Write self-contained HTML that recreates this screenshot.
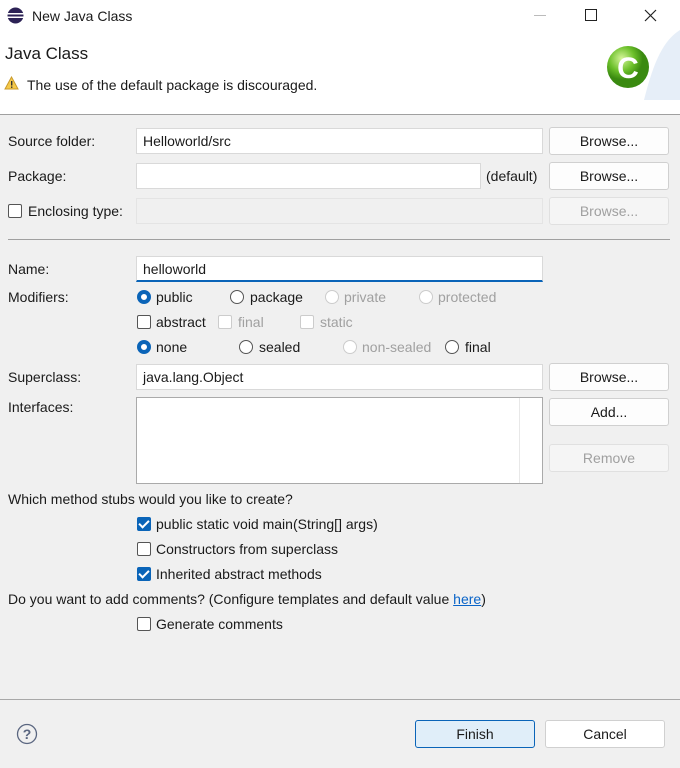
<!DOCTYPE html><html><head><style>
*{box-sizing:border-box;margin:0;padding:0}
body{width:680px;height:768px;background:#f0f0f0;font-family:"Liberation Sans",sans-serif;font-size:14px;color:#1a1a1a;position:relative;overflow:hidden}
.a{position:absolute;white-space:nowrap}
.tb{position:absolute;background:#fff;border:1px solid #d9d9d9}
.btn{position:absolute;background:#fdfdfd;border:1px solid #d0d0d0;border-radius:3px;text-align:center;line-height:26px;width:120px;height:28px}
.dis{color:#a0a0a0;background:#f5f5f5;border-color:#e0e0e0}
.rb{position:absolute;width:14px;height:14px;border:1px solid #555;border-radius:50%;background:#fff}
.rb.on{border:4px solid #0a64b8}
.rb.d{border-color:#ccc}
.cb{position:absolute;width:14px;height:14px;border:1px solid #555;border-radius:2px;background:#fff}
.cb.d{border-color:#ccc}
.cb.on{background:#0a64b8;border-color:#0a64b8}
.cb.on:after{content:"";position:absolute;left:3px;top:0px;width:4px;height:8px;border:solid #fff;border-width:0 2px 2px 0;transform:rotate(45deg)}
.g{color:#a0a0a0}
</style></head><body>
<div class="a" style="left:0;top:0;width:680px;height:114px;background:#fff"></div>
<div class="a" style="left:0;top:114px;width:680px;height:1px;background:#a0a0a0"></div>
<svg class="a" style="left:7px;top:7px" width="17" height="17"><circle cx="8.5" cy="8.5" r="8" fill="#2c2255"/><rect x="0" y="6" width="17" height="1.5" fill="#fff"/><rect x="0" y="9.5" width="17" height="1.5" fill="#fff"/></svg>
<div class="a" style="left:32px;top:8px;font-size:14px">New Java Class</div>
<div class="a" style="left:534px;top:15px;width:12px;height:1px;background:#bbb"></div>
<div class="a" style="left:585px;top:9px;width:12px;height:12px;border:1.3px solid #222"></div>
<svg class="a" style="left:644px;top:9px" width="13" height="13"><path d="M1 1L12 12M12 1L1 12" stroke="#222" stroke-width="1.2"/></svg>
<div class="a" style="left:5px;top:44px;font-size:17px">Java Class</div>
<svg class="a" style="left:4px;top:76px" width="15" height="14"><path d="M7.5 1L14 13H1Z" fill="#f5c94a" stroke="#c99a2b"/><rect x="7" y="5" width="1.4" height="4.5" fill="#333"/><rect x="7" y="10.5" width="1.4" height="1.4" fill="#333"/></svg>
<div class="a" style="left:27px;top:77px">The use of the default package is discouraged.</div>
<svg class="a" style="left:604px;top:30px" width="76" height="70"><defs><radialGradient id="gr" cx="0.35" cy="0.3"><stop offset="0" stop-color="#d6f59a"/><stop offset="0.6" stop-color="#6cc02a"/><stop offset="1" stop-color="#3a8a10"/></radialGradient></defs><path d="M40 70 C50 30 60 10 76 0 V70Z" fill="#e6eef8"/><circle cx="24" cy="37" r="21" fill="url(#gr)"/><text x="24" y="48" text-anchor="middle" font-size="30" font-weight="bold" fill="#fff" font-family="Liberation Sans">C</text></svg>

<div class="a" style="left:8px;top:133px">Source folder:</div>
<div class="tb" style="left:136px;top:128px;width:407px;height:26px"></div>
<div class="a" style="left:143px;top:133px">Helloworld/src</div>
<div class="btn" style="left:549px;top:127px">Browse...</div>
<div class="a" style="left:8px;top:168px">Package:</div>
<div class="tb" style="left:136px;top:163px;width:345px;height:26px"></div>
<div class="a" style="left:486px;top:168px">(default)</div>
<div class="btn" style="left:549px;top:162px">Browse...</div>
<div class="cb" style="left:8px;top:204px"></div>
<div class="a" style="left:28px;top:203px">Enclosing type:</div>
<div class="tb" style="left:136px;top:198px;width:407px;height:26px;background:#f0f0f0;border-color:#e4e4e4"></div>
<div class="btn dis" style="left:549px;top:197px">Browse...</div>
<div class="a" style="left:8px;top:239px;width:662px;height:1px;background:#a0a0a0"></div>

<div class="a" style="left:8px;top:261px">Name:</div>
<div class="tb" style="left:136px;top:256px;width:407px;height:26px;border-bottom:2px solid #0a64b8"></div>
<div class="a" style="left:143px;top:261px">helloworld</div>
<div class="a" style="left:8px;top:289px">Modifiers:</div>
<div class="rb on" style="left:137px;top:290px"></div><div class="a" style="left:156px;top:289px">public</div>
<div class="rb" style="left:230px;top:290px"></div><div class="a" style="left:250px;top:289px">package</div>
<div class="rb d" style="left:325px;top:290px"></div><div class="a g" style="left:344px;top:289px">private</div>
<div class="rb d" style="left:419px;top:290px"></div><div class="a g" style="left:438px;top:289px">protected</div>
<div class="cb" style="left:137px;top:315px"></div><div class="a" style="left:156px;top:314px">abstract</div>
<div class="cb d" style="left:218px;top:315px"></div><div class="a g" style="left:238px;top:314px">final</div>
<div class="cb d" style="left:300px;top:315px"></div><div class="a g" style="left:320px;top:314px">static</div>
<div class="rb on" style="left:137px;top:340px"></div><div class="a" style="left:156px;top:339px">none</div>
<div class="rb" style="left:239px;top:340px"></div><div class="a" style="left:259px;top:339px">sealed</div>
<div class="rb d" style="left:343px;top:340px"></div><div class="a g" style="left:362px;top:339px">non-sealed</div>
<div class="rb" style="left:445px;top:340px"></div><div class="a" style="left:465px;top:339px">final</div>
<div class="a" style="left:8px;top:369px">Superclass:</div>
<div class="tb" style="left:136px;top:364px;width:407px;height:26px"></div>
<div class="a" style="left:143px;top:369px">java.lang.Object</div>
<div class="btn" style="left:549px;top:363px">Browse...</div>
<div class="a" style="left:8px;top:399px">Interfaces:</div>
<div class="tb" style="left:136px;top:397px;width:407px;height:87px;border-color:#aaa"></div>
<div class="a" style="left:519px;top:398px;width:1px;height:85px;background:#e8e8e8"></div>
<div class="btn" style="left:549px;top:398px">Add...</div>
<div class="btn dis" style="left:549px;top:444px">Remove</div>

<div class="a" style="left:8px;top:491px">Which method stubs would you like to create?</div>
<div class="cb on" style="left:137px;top:517px"></div><div class="a" style="left:156px;top:516px">public static void main(String[] args)</div>
<div class="cb" style="left:137px;top:542px"></div><div class="a" style="left:156px;top:541px">Constructors from superclass</div>
<div class="cb on" style="left:137px;top:567px"></div><div class="a" style="left:156px;top:566px">Inherited abstract methods</div>
<div class="a" style="left:8px;top:591px">Do you want to add comments? (Configure templates and default value <span style="color:#0a64c8;text-decoration:underline">here</span>)</div>
<div class="cb" style="left:137px;top:617px"></div><div class="a" style="left:156px;top:616px">Generate comments</div>

<div class="a" style="left:0;top:699px;width:680px;height:1px;background:#a8a8a8"></div>
<svg class="a" style="left:16px;top:723px" width="22" height="22"><circle cx="11" cy="11" r="9.5" fill="none" stroke="#5a6680" stroke-width="1.3"/><text x="11" y="16" text-anchor="middle" font-size="14" font-weight="bold" fill="#5a6680" font-family="Liberation Sans">?</text></svg>
<div class="btn" style="left:415px;top:720px;background:#e0eef9;border-color:#0a64b8">Finish</div>
<div class="btn" style="left:545px;top:720px;background:#fff">Cancel</div>
</body></html>
